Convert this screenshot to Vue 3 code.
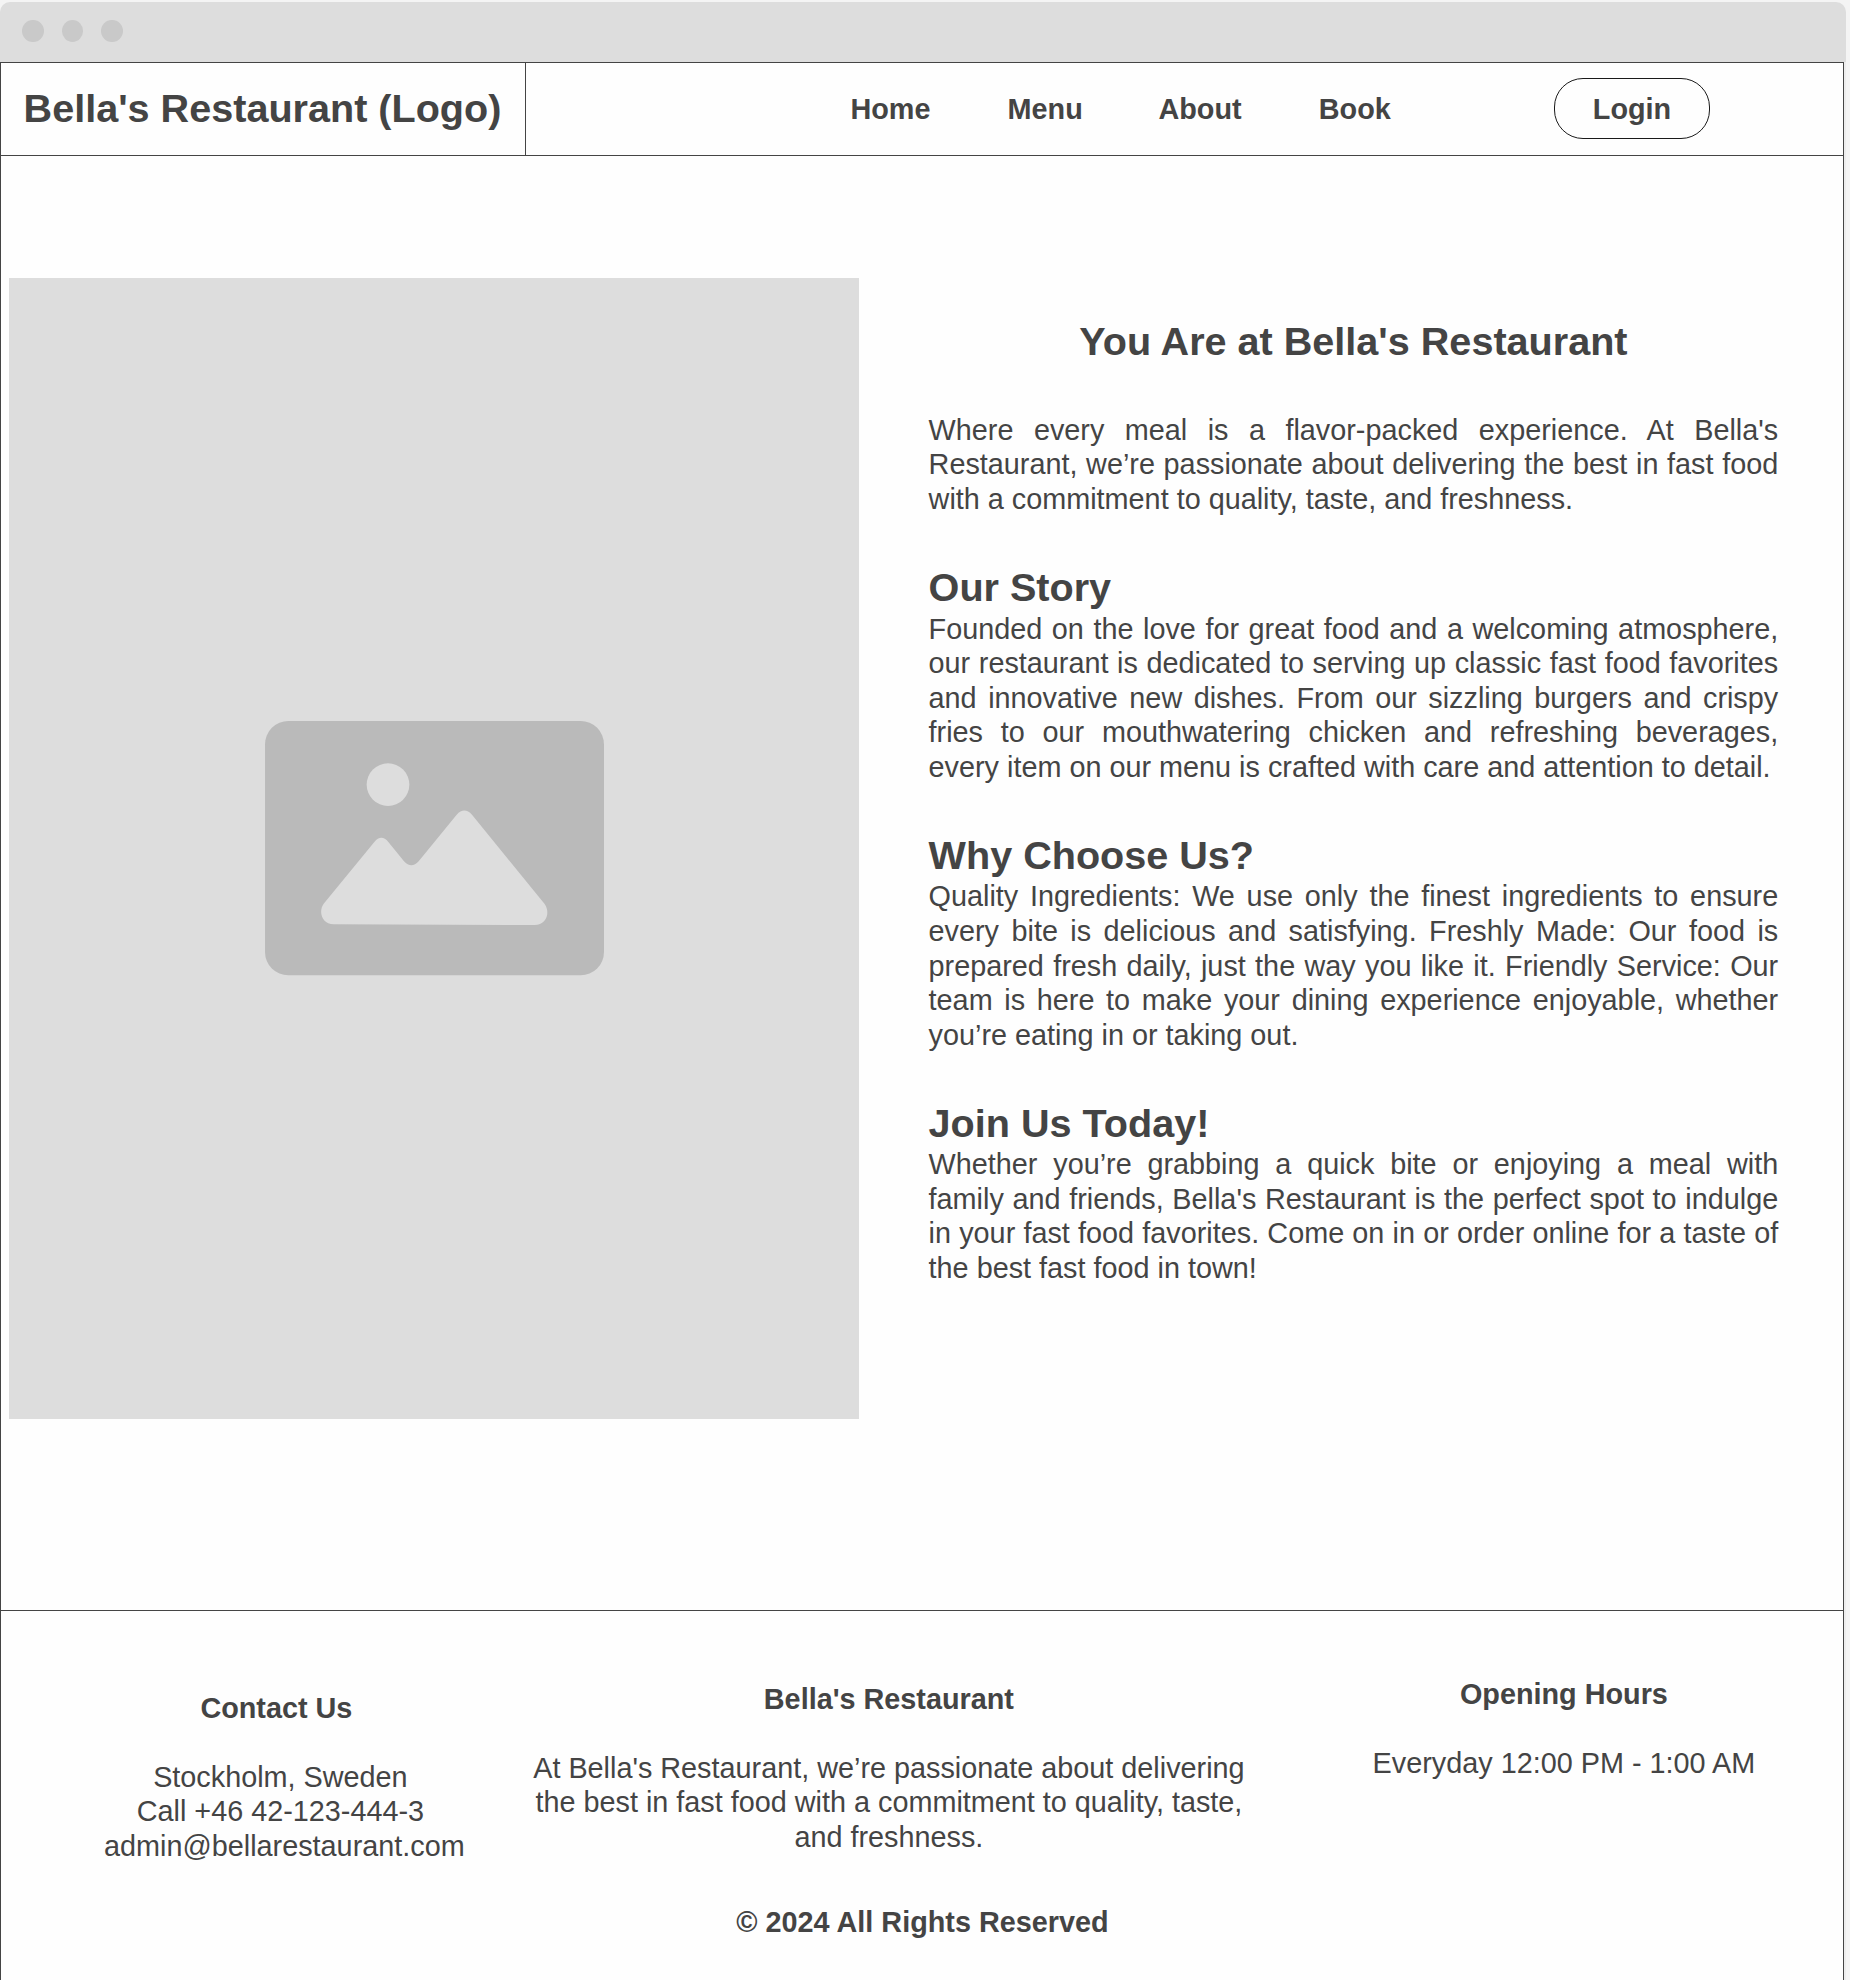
<script setup>
const navItems = ['Home', 'Menu', 'About', 'Book']

const sections = [
  {
    title: 'Our Story',
    text: "Founded on the love for great food and a welcoming atmosphere, our restaurant is dedicated to serving up classic fast food favorites and innovative new dishes. From our sizzling burgers and crispy fries to our mouthwatering chicken and refreshing beverages, every item on our menu is crafted with care and attention to detail.",
  },
  {
    title: 'Why Choose Us?',
    text: 'Quality Ingredients: We use only the finest ingredients to ensure every bite is delicious and satisfying. Freshly Made: Our food is prepared fresh daily, just the way you like it. Friendly Service: Our team is here to make your dining experience enjoyable, whether you’re eating in or taking out.',
  },
  {
    title: 'Join Us Today!',
    text: "Whether you’re grabbing a quick bite or enjoying a meal with family and friends, Bella's Restaurant is the perfect spot to indulge in your fast food favorites. Come on in or order online for a taste of the best fast food in town!",
  },
]

const contactTitle = 'Contact Us  '
const contactLines = ['Stockholm, Sweden ', 'Call +46 42-123-444-3 ', 'admin@bellarestaurant.com']
</script>

<template>
  <div class="page">
    <div class="window-bar">
      <span class="dot"></span>
      <span class="dot"></span>
      <span class="dot"></span>
    </div>
    <div class="window-body">
      <div class="site">
        <header class="header">
          <div class="logo">Bella's Restaurant (Logo)</div>
          <nav class="nav">
            <a v-for="item in navItems" :key="item" class="nav-item">{{ item }}</a>
          </nav>
          <button class="login">Login</button>
        </header>

        <main class="main">
          <div class="picture">
            <svg class="picture-icon" viewBox="45 62 1017 763">
              <rect x="45" y="62" width="1017" height="763" rx="70" fill="#bababa" />
              <circle cx="414" cy="253" r="64" fill="#dddddd" />
              <path
                fill="#dddddd"
                d="M221 610 L373 425 Q394 400 415 425 L462 483 Q484 507 506 483 L620 343 Q643 318 666 343 L884 611 C902 637 889 674 854 674 L251 672 C216 671 204 634 221 610 Z"
              />
            </svg>
          </div>
          <article class="story">
            <h1 class="story-title">You Are at Bella's Restaurant</h1>
            <p class="story-text">
              Where every meal is a flavor-packed experience. At Bella's Restaurant, we’re passionate about delivering the best in fast food with a commitment to quality, taste, and freshness.
            </p>
            <section v-for="section in sections" :key="section.title" class="story-section">
              <h2 class="section-title">{{ section.title }}</h2>
              <p class="story-text">{{ section.text }}</p>
            </section>
          </article>
        </main>

        <footer class="footer">
          <div class="footer-columns">
            <div class="contact">
              <h3>{{ contactTitle }}</h3>
              <p v-for="line in contactLines" :key="line">{{ line }}</p>
            </div>
            <div class="about">
              <h3>Bella's Restaurant</h3>
              <p>At Bella's Restaurant, we’re passionate about delivering the best in fast food with a commitment to quality, taste, and freshness.</p>
            </div>
            <div class="hours">
              <h3>Opening Hours</h3>
              <p>Everyday 12:00 PM - 1:00 AM</p>
            </div>
          </div>
          <div class="copyright">© 2024 All Rights Reserved</div>
        </footer>
      </div>
    </div>
  </div>
</template>

<style>
body {
  margin: 0;
  background: #f4f4f4;
}
</style>

<style scoped>
.page {
  box-sizing: border-box;
  width: 1850px;
  height: 1980px;
  padding-top: 2px;
  overflow: hidden;
  background: #f4f4f4;
  color: #444444;
  font-family: "Liberation Sans", Arial, sans-serif;
  font-size: 28.8px;
  line-height: 34.56px;
}

.window-bar {
  box-sizing: border-box;
  display: flex;
  gap: 18px;
  width: 1846px;
  height: 60px;
  padding: 18px 0 0 22px;
  border-radius: 10px 10px 0 0;
  background: #dddddd;
}

.dot {
  width: 21.5px;
  height: 22px;
  border-radius: 50%;
  background: #c9c9c9;
}

.window-body {
  width: 1846px;
  height: 1918px;
  background: #ececec;
}

.site {
  box-sizing: border-box;
  display: flex;
  flex-direction: column;
  width: 1844px;
  height: 1918px;
  border: solid #444444;
  border-width: 1px 1px 0;
  background: #fefefe;
}

.header {
  box-sizing: border-box;
  display: flex;
  align-items: center;
  height: 93px;
  border-bottom: 1px solid #444444;
  font-weight: 700;
}

.logo {
  box-sizing: border-box;
  display: flex;
  align-items: center;
  justify-content: center;
  width: 525px;
  height: 100%;
  padding: 0 1px 1px 0;
  border-right: 1px solid #444444;
  font-size: 39.6px;
  line-height: 47.52px;
  white-space: nowrap;
}

.nav {
  display: flex;
  margin-left: 287px;
}

.nav-item {
  width: 154.8px;
  text-align: center;
}

.login {
  box-sizing: border-box;
  width: 156px;
  height: 61px;
  margin: 0 0 2px 121.8px;
  padding: 2px 0 0;
  border: 1px solid #1a1a1a;
  border-radius: 29px;
  background: transparent;
  color: inherit;
  font: inherit;
}

.main {
  box-sizing: border-box;
  display: flex;
  align-items: flex-start;
  height: 1454px;
  padding: 122px 64px 0 8px;
}

.picture {
  display: flex;
  align-items: center;
  justify-content: center;
  width: 850px;
  height: 1141px;
  background: #dddddd;
}

.picture-icon {
  width: 339px;
  height: 254.3px;
}

.story {
  width: 849.6px;
  margin-left: 69.6px;
  padding-top: 39.9px;
}

h1,
h2,
h3,
p {
  margin: 0;
}

.story-title,
.section-title {
  font-size: 39.6px;
  line-height: 47.52px;
}

.story-title {
  margin-bottom: 47.52px;
  text-align: center;
}

.story-section {
  margin-top: 47.52px;
}

.section-title {
  padding-bottom: 1px;
  line-height: 46.52px;
}

.story-text {
  text-align: justify;
}

.footer {
  box-sizing: border-box;
  flex: 1;
  border-top: 1px solid #444444;
  text-align: center;
}

.footer h3 {
  margin-bottom: 34.56px;
  font-size: 28.8px;
}

.footer-columns {
  display: flex;
  align-items: flex-start;
  height: 294px;
}

.contact {
  width: 400px;
  margin: 79.7px 0 0 83.4px;
  white-space: pre;
}

.about {
  width: 730px;
  margin: 70.8px 0 0 39.5px;
}

.hours {
  width: 420px;
  margin: 66px 0 0 100px;
}

.copyright {
  padding-left: 1px;
  font-weight: 700;
}
</style>
